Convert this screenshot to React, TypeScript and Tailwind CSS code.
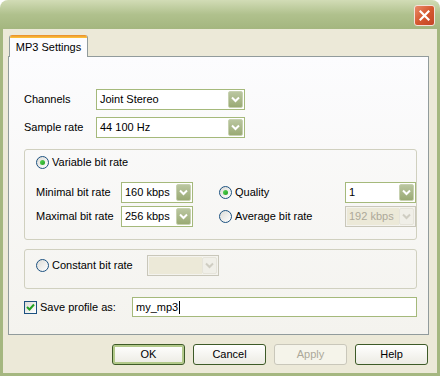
import React from "react";

const font = "font-['Tahoma','Liberation_Sans',Arial,sans-serif]";

function Chevron({ color }: { color: string }) {
  return (
    <svg width="9" height="7" viewBox="0 0 9 7">
      <path d="M1 1.5 L4.5 5 L8 1.5" fill="none" stroke={color} strokeWidth="2" />
    </svg>
  );
}

function Combo({ value, className, disabled }: { value: string; className: string; disabled?: boolean }) {
  return (
    <div
      className={`flex h-[21px] items-stretch border p-px ${className} ${
        disabled ? "border-[#C9C7BA] bg-[#F4F3EE]" : "border-[#A5B97B] bg-white"
      }`}
    >
      <div className={`flex flex-1 items-center pl-[2px] ${disabled ? "bg-[#ECE9D8] text-[#ACA899]" : "text-black"}`}>
        {value}
      </div>
      <div
        className={`flex w-[15px] items-center justify-center rounded-[2px] border ${
          disabled
            ? "border-[#E6E4DA] bg-[#F0EFE8]"
            : "border-[#C7D1B0] bg-gradient-to-b from-[#BAC6A0] to-[#9AAA74]"
        }`}
      >
        <Chevron color={disabled ? "#CFCDC2" : "#FFFFFF"} />
      </div>
    </div>
  );
}

function Radio({ checked }: { checked?: boolean }) {
  return (
    <span className="flex h-[13px] w-[13px] shrink-0 items-center justify-center rounded-full border border-[#1C5180] bg-gradient-to-br from-[#DCDCD7] to-white">
      {checked && <span className="h-[5px] w-[5px] rounded-full bg-gradient-to-br from-[#55D655] to-[#21A121]" />}
    </span>
  );
}

function Button({ label, focused, disabled }: { label: string; focused?: boolean; disabled?: boolean }) {
  return (
    <div
      className={`flex h-[21px] w-[73px] items-center justify-center rounded-[3px] border ${
        disabled
          ? "border-[#C9C7BA] bg-[#F5F4EA] text-[#ACA899]"
          : "border-[#3D5A27] bg-gradient-to-b from-white to-[#ECEBE3] text-black"
      } ${focused ? "shadow-[inset_0_0_0_2px_#B2C98A]" : ""}`}
    >
      {label}
    </div>
  );
}

export default function App() {
  return (
    <div className={`flex h-[376px] w-[440px] flex-col text-[11px] leading-none ${font}`}>
      {/* Title bar */}
      <div className="flex h-[29px] shrink-0 items-start justify-end rounded-t-[8px] bg-gradient-to-b from-[#D2DCB6] via-[#B0C18D] to-[#A4B67F] pr-[5px] pt-[5px]">
        <div className="flex h-[21px] w-[21px] items-center justify-center rounded-[3px] border border-[#F4E1DA] bg-gradient-to-br from-[#E98A68] via-[#D5582F] to-[#C44426]">
          <svg width="11" height="11" viewBox="0 0 11 11">
            <path d="M1.5 1.5 L9.5 9.5 M9.5 1.5 L1.5 9.5" stroke="#FFFFFF" strokeWidth="2.2" strokeLinecap="square" />
          </svg>
        </div>
      </div>

      {/* Body */}
      <div className="flex flex-1 flex-col border-x-[3px] border-b-[3px] border-[#A5B780] bg-[#ECE9D8] pl-[5px] pr-[8px] pt-[6px] pb-[8px]">
        {/* Tab */}
        <div className="relative z-10 ml-px flex h-[22px] w-[79px] flex-col overflow-hidden rounded-t-[3px] border-x border-[#919B9C] bg-[#FCFCFE]">
          <div className="h-[3px] bg-gradient-to-b from-[#E68B2C] to-[#FFC73C]" />
          <div className="flex flex-1 items-center justify-center pb-px">MP3 Settings</div>
        </div>

        {/* Panel */}
        <div className="-mt-px flex h-[279px] w-[421px] flex-col border border-[#919B9C] bg-gradient-to-b from-[#FCFCFE] to-[#F4F3EE] pl-[15px] pr-[11px] pt-[32px]">
          <div className="flex h-[21px] items-center">
            <span className="w-[72px]">Channels</span>
            <Combo value="Joint Stereo" className="w-[149px]" />
          </div>
          <div className="mt-[7px] flex h-[21px] items-center">
            <span className="w-[72px]">Sample rate</span>
            <Combo value="44 100 Hz" className="w-[149px]" />
          </div>

          {/* Variable bit rate group */}
          <div className="mt-[11px] flex h-[91px] flex-col rounded-[3px] border border-[#D0D0BF] pl-[11px] pt-[6px]">
            <div className="flex h-[13px] items-center gap-[3px]">
              <Radio checked />
              <span>Variable bit rate</span>
            </div>
            <div className="mt-[13px] grid grid-cols-[85px_72px_26px_126px_71px] grid-rows-[21px_21px] gap-y-[3px]">
              <span className="self-center">Minimal bit rate</span>
              <Combo value="160 kbps" className="w-[72px]" />
              <span />
              <div className="flex items-center gap-[3px]">
                <Radio checked />
                <span>Quality</span>
              </div>
              <Combo value="1" className="w-[71px]" />

              <span className="self-center">Maximal bit rate</span>
              <Combo value="256 kbps" className="w-[72px]" />
              <span />
              <div className="flex items-center gap-[3px]">
                <Radio />
                <span>Average bit rate</span>
              </div>
              <Combo value="192 kbps" className="w-[71px]" disabled />
            </div>
          </div>

          {/* Constant bit rate group */}
          <div className="mt-[9px] flex h-[40px] items-start rounded-[3px] border border-[#D0D0BF] pl-[11px] pt-[5px]">
            <div className="flex h-[21px] w-[111px] items-center gap-[3px]">
              <Radio />
              <span>Constant bit rate</span>
            </div>
            <Combo value="" className="w-[72px]" disabled />
          </div>

          {/* Save profile */}
          <div className="mt-[8px] flex h-[20px] items-center">
            <div className="flex w-[108px] items-center gap-[3px]">
              <span className="flex h-[13px] w-[13px] items-center justify-center border border-[#1C5180] bg-gradient-to-br from-[#DCDCD7] to-white">
                <svg width="9" height="9" viewBox="0 0 9 9">
                  <path d="M1 4 L3.5 6.5 L8 1.5" fill="none" stroke="#21A121" strokeWidth="2" />
                </svg>
              </span>
              <span>Save profile as:</span>
            </div>
            <div className="flex h-[20px] w-[285px] items-center border border-[#A5B97B] bg-white pl-[3px]">
              <span>my_mp3</span>
              <span className="ml-px h-[13px] w-px bg-black" />
            </div>
          </div>
        </div>

        {/* Buttons */}
        <div className="mt-[9px] flex justify-end gap-[8px] pr-px">
          <Button label="OK" focused />
          <Button label="Cancel" />
          <Button label="Apply" disabled />
          <Button label="Help" />
        </div>
      </div>
    </div>
  );
}
